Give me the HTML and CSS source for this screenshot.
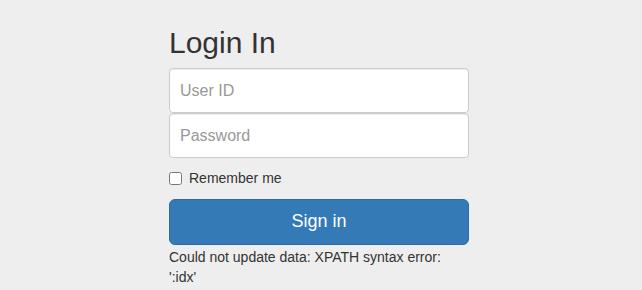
FILE: index.html
```html
<!DOCTYPE html>
<html lang="en">
<head>
  <meta charset="UTF-8" />
  <meta name="viewport" content="width=device-width, initial-scale=1.0"/>
  <title>Login In</title>
  <link rel="stylesheet" href="styles.css">
</head>
<body>
<div class="container">
  <form class="form-signin">
    <h2 class="form-signin-heading">Login In</h2>
    <input type="text" class="form-control" placeholder="User ID">
    <input type="password" class="form-control" placeholder="Password">
    <div class="checkbox">
      <label><input type="checkbox"> Remember me</label>
    </div>
    <button class="btn-signin" type="submit">Sign in</button>
    <div class="error">Could not update data: XPATH syntax error: ':idx'</div>
  </form>
</div>
</body>
</html>
```

FILE: styles.css
```css
* {
  box-sizing: border-box;
}

body {
  margin: 0;
  background-color: #eee;
  font-family: "Liberation Sans", Arial, sans-serif;
  font-size: 14px;
  line-height: 1.42857;
  color: #333;
}

.container {
  width: 330px;
  margin: 0 auto;
  padding: 0 15px;
  position: relative;
  left: -2px;
}

.form-signin-heading {
  margin: 26px 0 9px;
  font-size: 30px;
  font-weight: 500;
  line-height: 1.1;
}

.form-control {
  display: block;
  width: 100%;
  height: 45px;
  padding: 10px;
  font-family: inherit;
  font-size: 16px;
  color: #555;
  background-color: #fff;
  border: 1px solid #ccc;
  border-radius: 4px;
  box-shadow: inset 0 1px 1px rgba(0, 0, 0, 0.075);
  margin: 0;
}

.form-control::placeholder {
  color: #999;
}

.checkbox {
  margin: 10px 0 10px;
  padding-top: 1px;
  min-height: 20px;
}

.checkbox label {
  display: flex;
  align-items: center;
  gap: 7px;
  font-weight: 400;
}

.checkbox input {
  width: 13px;
  height: 13px;
  margin: 0;
}

.btn-signin {
  display: block;
  width: 100%;
  padding: 10px 16px;
  font-family: inherit;
  font-size: 18px;
  line-height: 1.3333;
  color: #fff;
  background-color: #337ab7;
  border: 1px solid #2e6da4;
  border-radius: 6px;
  cursor: pointer;
  margin-top: 7px;
}

.error {
  margin-top: 2px;
  line-height: 20px;
}
```
